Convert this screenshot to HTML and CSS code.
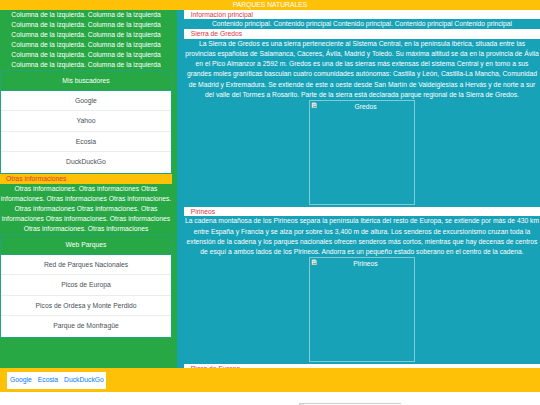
FILE: index.html
```html
<!DOCTYPE html>
<html lang="es">
<head>
<meta charset="utf-8">
<title>Parques naturales</title>
<link rel="stylesheet" href="styles.css">
</head>
<body>
<header class="top">PARQUES NATURALES</header>
<div class="row">
  <aside class="left">
    <p class="left-text">Columna de la izquierda. Columna de la izquierda Columna de la izquierda. Columna de la izquierda Columna de la izquierda. Columna de la izquierda Columna de la izquierda. Columna de la izquierda Columna de la izquierda. Columna de la izquierda Columna de la izquierda. Columna de la izquierda</p>
    <div class="card">
      <div class="card-head">Mis buscadores</div>
      <ul class="list">
        <li><a href="#">Google</a></li>
        <li><a href="#">Yahoo</a></li>
        <li><a href="#">Ecosia</a></li>
        <li><a href="#">DuckDuckGo</a></li>
      </ul>
    </div>
    <h3 class="left-bar">Otras informaciones</h3>
    <p class="left-text">Otras informaciones. Otras informaciones Otras informaciones. Otras informaciones Otras informaciones. Otras informaciones Otras informaciones. Otras informaciones Otras informaciones. Otras informaciones Otras informaciones. Otras informaciones</p>
    <div class="card">
      <div class="card-head">Web Parques</div>
      <ul class="list">
        <li><a href="#">Red de Parques Nacionales</a></li>
        <li><a href="#">Picos de Europa</a></li>
        <li><a href="#">Picos de Ordesa y Monte Perdido</a></li>
        <li><a href="#">Parque de Monfragüe</a></li>
      </ul>
    </div>
  </aside>
  <main class="main">
    <h2 class="bar">Información principal</h2>
    <p class="text">Contenido principal. Contenido principal Contenido principal. Contenido principal Contenido principal</p>
    <h3 class="bar">Sierra de Gredos</h3>
    <p class="text">La Sierra de Gredos es una sierra perteneciente al Sistema Central, en la península ibérica, situada entre las provincias españolas de Salamanca, Cáceres, Ávila, Madrid y Toledo. Su máxima altitud se da en la provincia de Ávila en el Pico Almanzor a 2592 m. Gredos es una de las sierras más extensas del sistema Central y en torno a sus grandes moles graníticas basculan cuatro comunidades autónomas: Castilla y León, Castilla-La Mancha, Comunidad de Madrid y Extremadura. Se extiende de este a oeste desde San Martín de Valdeiglesias a Hervás y de norte a sur del valle del Tormes a Rosarito. Parte de la sierra está declarada parque regional de la Sierra de Gredos.</p>
    <div class="pic">
      <svg class="broken" viewBox="0 0 16 16"><path d="M2 1h9l3 3v11H2z" fill="#f4f4f4" stroke="#9a9a9a"/><rect x="4" y="4" width="8" height="4" fill="#9cc8ee"/><path d="M4 12l3-3 2 2 2-2 2 2v2H4z" fill="#5aa55a"/></svg>
      <span class="alt">Gredos</span>
    </div>
    <h3 class="bar">Pirineos</h3>
    <p class="text">La cadena montañosa de los Pirineos separa la península ibérica del resto de Europa, se extiende por más de 430 km entre España y Francia y se alza por sobre los 3,400 m de altura. Los senderos de excursionismo cruzan toda la extensión de la cadena y los parques nacionales ofrecen senderos más cortos, mientras que hay decenas de centros de esquí a ambos lados de los Pirineos. Andorra es un pequeño estado soberano en el centro de la cadena.</p>
    <div class="pic">
      <svg class="broken" viewBox="0 0 16 16"><path d="M2 1h9l3 3v11H2z" fill="#f4f4f4" stroke="#9a9a9a"/><rect x="4" y="4" width="8" height="4" fill="#9cc8ee"/><path d="M4 12l3-3 2 2 2-2 2 2v2H4z" fill="#5aa55a"/></svg>
      <span class="alt">Pirineos</span>
    </div>
    <h3 class="bar">Picos de Europa</h3>
  </main>
</div>
<footer class="foot">
  <nav class="foot-links">
    <a href="#">Google</a>
    <a href="#">Ecosia</a>
    <a href="#">DuckDuckGo</a>
  </nav>
</footer>
<div class="below">
  <div class="ghost"><span class="ghost-icon"></span></div>
</div>
</body>
</html>
```
FILE: styles.css
```css
* {
  box-sizing: border-box;
  margin: 0;
  padding: 0;
}

html,
body {
  background: #fff;
}

body {
  font-family: "Liberation Sans", Arial, sans-serif;
  font-size: 6.75px;
  line-height: 1.5;
  color: #fff;
  overflow: hidden;
}

.top {
  background: #ffc107;
  height: 9.5px;
  line-height: 9.5px;
  text-align: center;
  color: #fff;
}

.row {
  display: flex;
  height: 358.8px;
}

.left {
  width: 177px;
  flex: none;
  background: #28a745;
  padding-right: 5px;
}

.left-text {
  text-align: center;
}

.card {
  border: 1px solid #21a575;
  background: #fff;
}

.card-head {
  height: 19.7px;
  line-height: 19.7px;
  background: #28a745;
  color: #fff;
  text-align: center;
  border-bottom: 1px solid #21a575;
}

.list {
  list-style: none;
}

.list li {
  height: 20.4px;
  line-height: 20.4px;
  text-align: center;
  border-bottom: 1px solid #ececec;
}

.list li:last-child {
  border-bottom: none;
}

.list a {
  color: #495057;
  text-decoration: none;
}

.left-bar {
  font-size: 6.75px;
  font-weight: normal;
  background: #ffc107;
  color: #dc3545;
  padding-left: 6px;
  height: 10.2px;
  line-height: 10.2px;
}

.main {
  flex: 1;
  background: #17a2b8;
  padding-left: 7px;
  overflow: hidden;
}

.bar {
  font-size: 6.75px;
  font-weight: normal;
  background: #fff;
  color: #dc3545;
  padding-left: 6.7px;
  height: 9.7px;
  line-height: 9.7px;
}

.text {
  text-align: center;
}

.pic {
  width: 105.5px;
  height: 105.5px;
  margin: 0 auto 1.5px;
  border: 1px solid rgba(255, 255, 255, 0.45);
  display: flex;
  align-items: flex-start;
}

.broken {
  width: 6.5px;
  height: 6.5px;
  margin: 1px 0 0 0.5px;
  flex: none;
}

.alt {
  flex: 1;
  text-align: center;
  padding-top: 1px;
  line-height: 10px;
}

.foot {
  background: #ffc107;
  height: 24px;
  padding: 3.7px 6.7px;
}

.foot-links {
  display: inline-flex;
  gap: 6px;
  background: #fff;
  padding: 3.3px 2.5px 3.3px 3.3px;
}

.foot-links a {
  color: #007bff;
  text-decoration: none;
}

.below {
  height: 13px;
  padding: 11px 0 0 299px;
}

.ghost {
  width: 102px;
  height: 2px;
  border-top: 1px solid #cfcfcf;
  border-left: 1px solid #cfcfcf;
}

.ghost-icon {
  display: block;
  width: 4px;
  height: 2px;
  background: #e2e2e2;
}
```
